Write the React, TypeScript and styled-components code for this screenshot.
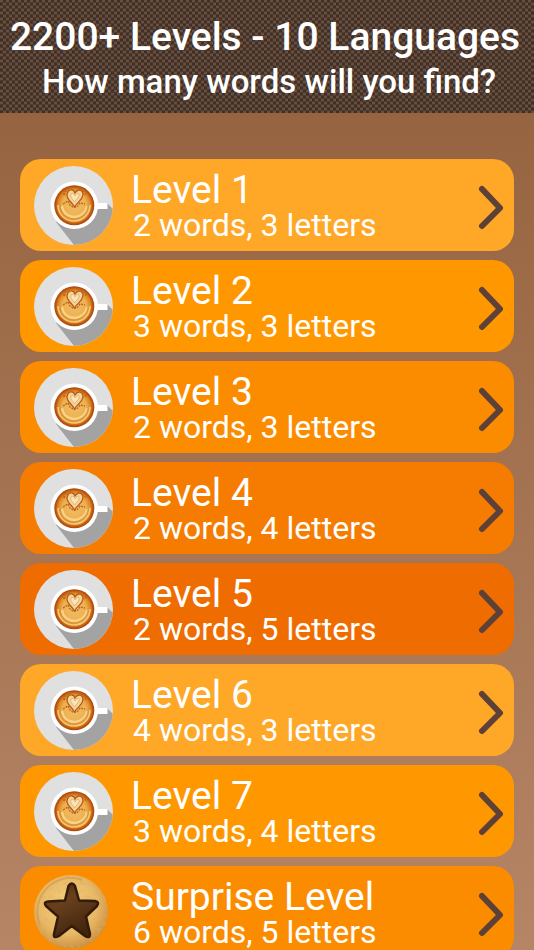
import React from "react";
import styled, { createGlobalStyle } from "styled-components";

const GlobalStyle = createGlobalStyle`
  *, *::before, *::after { box-sizing: border-box; }
  body { margin: 0; overflow: hidden; font-family: Roboto, sans-serif; color: #fff; }
`;

const Page = styled.main`
  height: 100vh;
  overflow: hidden;
  background: linear-gradient(#966440 112px, #b58566 100%);
`;

const Header = styled.header`
  position: relative;
  height: 113px;
  padding-top: 13px;
  text-align: center;
  overflow: hidden;
`;

const Weave = styled.svg`
  position: absolute;
  inset: 0;
  width: 100%;
  height: 100%;
`;

const Title = styled.h1`
  position: relative;
  margin: 0;
  padding-right: 4px;
  font-size: 39px;
  line-height: 48px;
  font-weight: 500;
  white-space: nowrap;
`;

const Question = styled.p`
  position: relative;
  margin: 0;
  padding-left: 4px;
  font-size: 33px;
  line-height: 42px;
  font-weight: 500;
  white-space: nowrap;
`;

const LevelList = styled.ul`
  list-style: none;
  margin: 0;
  padding: 46px 20px 0;
  display: flex;
  flex-direction: column;
  gap: 9px;
`;

const LevelCard = styled.button<{ $color: string }>`
  display: flex;
  align-items: center;
  width: 100%;
  height: 92px;
  padding: 0 9px 0 14px;
  border: 0;
  border-radius: 21px;
  background: ${(p) => p.$color};
  color: #fff;
  font-family: inherit;
  text-align: left;
  cursor: pointer;
`;

const Picture = styled.svg`
  flex: none;
  width: 79px;
  height: 79px;
`;

const Labels = styled.span`
  flex: 1;
  display: flex;
  flex-direction: column;
  margin-left: 18px;
  padding-top: 2px;
  white-space: nowrap;
`;

const Name = styled.span`
  font-size: 39px;
  line-height: 38px;
`;

const Details = styled.span`
  padding-left: 2px;
  font-size: 32px;
  line-height: 32px;
`;

const Arrow = styled.svg`
  flex: none;
  width: 28px;
  height: 50px;
`;

function CoffeePicture() {
  return (
    <Picture viewBox="0 0 79 79" aria-hidden="true">
      <defs>
        <clipPath id="saucer"><circle cx="39.5" cy="39.5" r="39.5" /></clipPath>
        <radialGradient id="coffee">
          <stop offset="0" stopColor="#f0bd68" />
          <stop offset=".6" stopColor="#eeb04f" />
          <stop offset=".82" stopColor="#dc8425" />
          <stop offset=".92" stopColor="#bd560e" />
          <stop offset="1" stopColor="#a84408" />
        </radialGradient>
      </defs>
      <g clipPath="url(#saucer)">
        <rect width="79" height="79" fill="#e0e0e0" />
        <path d="M22 56 40 79H79V43L73 37H62L56 24Z" fill="#a3a3a3" />
      </g>
      <rect x="60" y="37" width="13.5" height="6" fill="#fff" />
      <circle cx="40.3" cy="39.3" r="23.8" fill="#fff" />
      <circle cx="40.3" cy="39.3" r="20" fill="url(#coffee)" />
      <path d="M24 39C24 49 32 55 40 55 49 55 56 48 56 39" fill="none" stroke="#f8d98c" strokeWidth="1.6" opacity=".8" />
      <path d="M28 40C29 48 35 51 41 51 48 50 52 46 53 40" fill="none" stroke="#f9dd9b" strokeWidth="2.4" opacity=".75" />
      <path d="M26 40C27 48 33 53 41 53 48 52 54 46 54 40" fill="none" stroke="#d68a2f" strokeWidth=".7" />
      <path d="M30 29Q31 23 36 22M44 22Q51 23 52 29" fill="none" stroke="#c4661a" strokeWidth="2" strokeDasharray="2 1" />
      <path d="M29 38 34 35 36 39 39 41 43 41 46 37 51 38" fill="none" stroke="#bd6b20" strokeWidth="1.4" strokeDasharray="2 1" />
      <path d="M40.5 41C38 36 33 34 33 29 34 22 40 23 41 27 44 22 49 24 49 29 48 35 43 36 40.5 41Z" fill="#f5d49a" stroke="#b55b17" strokeWidth="1.3" />
      <path d="M40.5 36C38 32 36 31 37 28 39 26 41 29 41 30 43 26 46 27 45 30 44 33 42 33 40.5 36Z" fill="#fae4b8" stroke="#dfaa64" strokeWidth=".8" />
    </Picture>
  );
}

function CookiePicture() {
  return (
    <Picture viewBox="0 0 79 79" aria-hidden="true">
      <defs>
        <radialGradient id="cookie" cx=".45" cy=".4" r=".62">
          <stop offset="0" stopColor="#f5d07c" />
          <stop offset=".65" stopColor="#e8b866" />
          <stop offset="1" stopColor="#c98c3c" />
        </radialGradient>
        <linearGradient id="chocolate" x2=".5" y2="1">
          <stop offset="0" stopColor="#4a2a11" />
          <stop offset=".4" stopColor="#69401d" />
          <stop offset="1" stopColor="#43250e" />
        </linearGradient>
        <filter id="crumbs" x="0" y="0" width="1" height="1">
          <feTurbulence type="fractalNoise" baseFrequency=".22" numOctaves="3" seed="7" />
          <feColorMatrix values="0 0 0 0 .72  0 0 0 0 .42  0 0 0 0 .14  3 0 0 0 -1.5" />
          <feComposite in2="SourceGraphic" operator="in" />
        </filter>
      </defs>
      <circle cx="37" cy="39" r="37" fill="url(#cookie)" />
      <circle cx="37" cy="39" r="37" filter="url(#crumbs)" opacity=".65" />
      <path d="M6 52A33 34 0 0 1 48 7" fill="none" stroke="#c9924a" strokeWidth="2" opacity=".5" />
      <path d="M34.5 13Q37.7 8 41 13L45 27.5 61 28Q66 29 63 33L52 43.5 56 61Q56 66 51 63L37.7 53 25 63Q19 66 20 61L24 43.5 12 33Q9 29 14 28.5L31 27.5Z" fill="url(#chocolate)" stroke="#341b09" strokeWidth="2.5" strokeLinejoin="round" />
    </Picture>
  );
}

const levels = [
  { name: "Level 1", details: "2 words, 3 letters", color: "#ffa726" },
  { name: "Level 2", details: "3 words, 3 letters", color: "#ff9800" },
  { name: "Level 3", details: "2 words, 3 letters", color: "#fb8c00" },
  { name: "Level 4", details: "2 words, 4 letters", color: "#f57c00" },
  { name: "Level 5", details: "2 words, 5 letters", color: "#ef6c00" },
  { name: "Level 6", details: "4 words, 3 letters", color: "#ffa726" },
  { name: "Level 7", details: "3 words, 4 letters", color: "#ff9800" },
  { name: "Surprise Level", details: "6 words, 5 letters", color: "#fb8c00", surprise: true },
];

export default function App() {
  return (
    <Page>
      <GlobalStyle />
      <Header>
        <Weave aria-hidden="true">
          <defs>
            <pattern id="weave" width="6" height="6" patternUnits="userSpaceOnUse">
              <rect width="6" height="6" fill="#4f3b30" />
              <path d="M0 0h3v2H0zM3 3h3v2H3z" fill="#66503f" />
              <path d="M3 0h3v2H3zM0 3h3v2H0z" fill="#422e24" />
            </pattern>
          </defs>
          <rect width="100%" height="100%" fill="url(#weave)" />
        </Weave>
        <Title>2200+ Levels - 10 Languages</Title>
        <Question>How many words will you find?</Question>
      </Header>
      <LevelList>
        {levels.map((level) => (
          <li key={level.name}>
            <LevelCard type="button" $color={level.color}>
              {level.surprise ? <CookiePicture /> : <CoffeePicture />}
              <Labels>
                <Name>{level.name}</Name>
                <Details>{level.details}</Details>
              </Labels>
              <Arrow viewBox="0 0 28 50" aria-hidden="true">
                <path d="M5 9 23 28 5 46" fill="none" stroke="#5d4037" strokeWidth="6" strokeLinecap="round" strokeLinejoin="round" />
              </Arrow>
            </LevelCard>
          </li>
        ))}
      </LevelList>
    </Page>
  );
}
